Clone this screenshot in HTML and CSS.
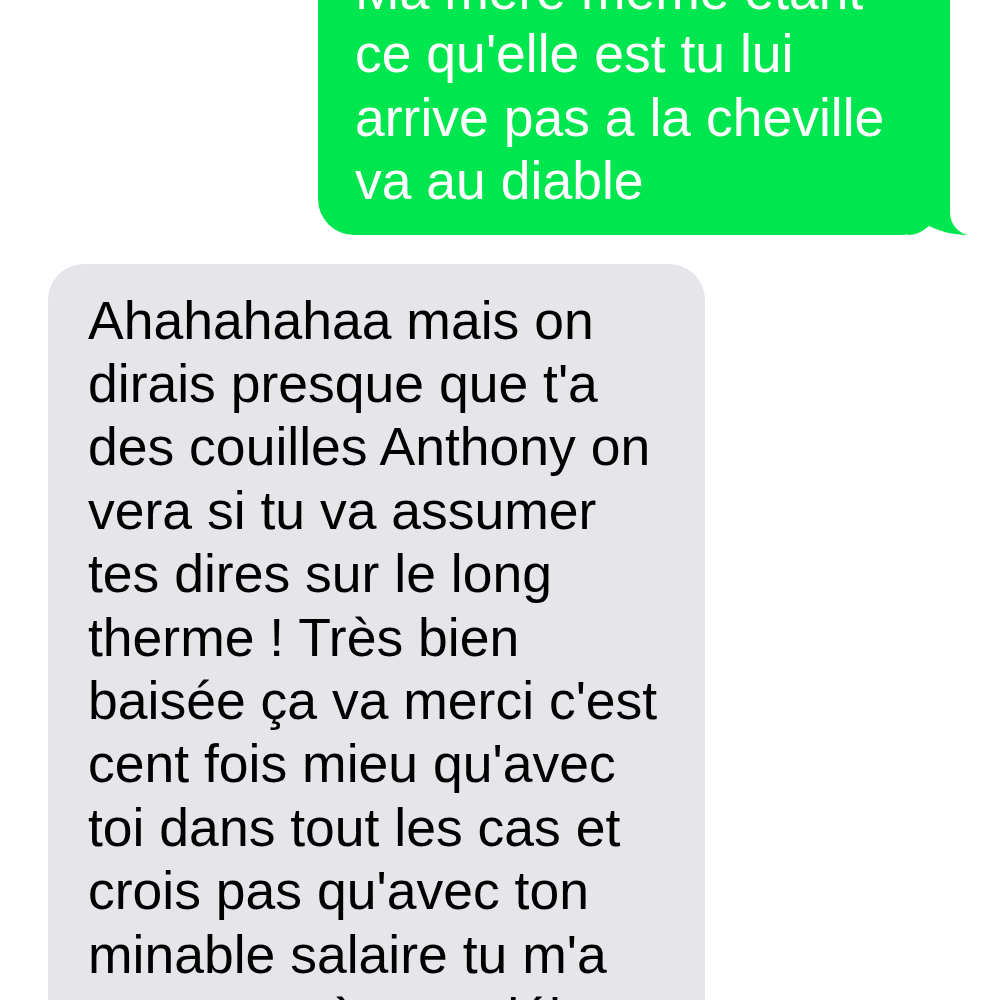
FILE: index.html
```html
<!DOCTYPE html>
<html lang="fr">
<head>
<meta charset="utf-8">
<title>Messages</title>
<link rel="stylesheet" href="styles.css">
</head>
<body>
<div class="thread">
  <div class="msg sent">
    <p>Ma mère même étant<br>ce qu'elle est tu lui<br>arrive pas a la cheville<br>va au diable</p>
    <svg class="tail" viewBox="0 0 60 50" aria-hidden="true">
      <path d="M0 0 L42 0 L42 27 C42 39 50 48 60 50 C45 50 31 46 21 41 C16 45 10 50 0 50 Z" fill="#00e64f"/>
    </svg>
  </div>
  <div class="msg received">
    <p>Ahahahahaa mais on<br>dirais presque que t'a<br>des couilles Anthony on<br>vera si tu va assumer<br>tes dires sur le long<br>therme ! Très bien<br>baisée ça va merci c'est<br>cent fois mieu qu'avec<br>toi dans tout les cas et<br>crois pas qu'avec ton<br>minable salaire tu m'a<br>entretenu à mes débuts</p>
  </div>
</div>
</body>
</html>
```

FILE: styles.css
```css
html, body {
  margin: 0;
  padding: 0;
  overflow: hidden;
  background: #ffffff;
}

.thread {
  display: flex;
  flex-direction: column;
  gap: 29px;
  margin-top: -63px;
  padding: 0 50px 0 48px;
}

.msg {
  position: relative;
  box-sizing: border-box;
  font-family: "Liberation Sans", Arial, sans-serif;
  font-size: 53.5px;
  line-height: 63.4px;
  padding: 22px 37px;
  border-radius: 36px;
  white-space: nowrap;
}

.msg p {
  margin: 0;
}

.sent {
  align-self: flex-end;
  width: 632px;
  background: #00e64f;
  color: #ffffff;
  border-bottom-right-radius: 50px;
}

.received {
  align-self: flex-start;
  width: 657px;
  background: #e5e5ea;
  color: #000000;
  padding: 25px 37px 22px 40px;
}

.tail {
  position: absolute;
  right: -18px;
  bottom: 0;
  width: 60px;
  height: 50px;
}
```
